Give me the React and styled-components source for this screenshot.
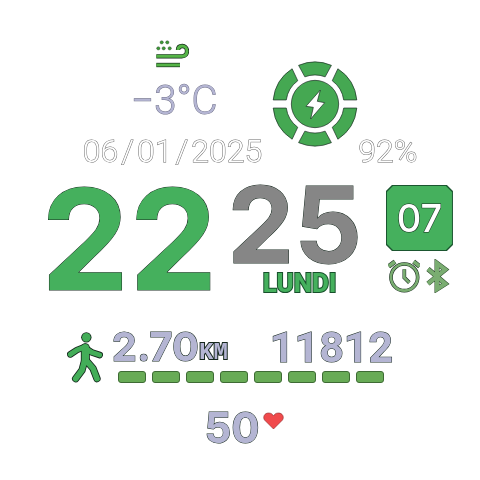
import React from "react";
import styled, { createGlobalStyle } from "styled-components";

const GlobalStyle = createGlobalStyle`
  * { box-sizing: border-box; }
  body { margin: 0; background: #fff; font-family: Inter, "Liberation Sans", sans-serif; }
`;

const ink = "#14261c";
const green = "#45b05d";
const lilac = "#b4b5d3";
const roboto = `Roboto, "Liberation Sans", sans-serif`;

const Face = styled.main`
  min-height: 100vh;
  padding: 40px 8px 32px;
  display: flex;
  flex-direction: column;
  align-items: center;
  will-change: transform;
`;

const StatusRow = styled.section`
  display: flex;
  align-items: flex-end;
  padding-left: 20px;
`;

const Weather = styled.div`
  display: flex;
  flex-direction: column;
  align-items: center;
`;

const Temperature = styled.div`
  margin: 18px 0 23px;
  padding-left: 4px;
  font-family: ${roboto};
  font-size: 40px;
  line-height: 30px;
  font-weight: 300;
  color: ${lilac};
  -webkit-text-stroke: 1px #6f7088;
  paint-order: stroke;
`;

const OutlineText = styled.div`
  font-family: ${roboto};
  font-size: 32px;
  line-height: 24px;
  font-weight: 300;
  color: #fff;
  -webkit-text-stroke: 1px #6a6a6a;
  paint-order: stroke;
  white-space: nowrap;
`;

const DateLine = styled(OutlineText)`
  display: flex;
  gap: 3px;
`;

const Gauge = styled.div`
  margin: 0 0 16px 10px;
  line-height: 0;
`;

const TimeRow = styled.section`
  display: flex;
  align-items: flex-start;
  margin-top: 22px;
  padding-left: 14px;
`;

const Digits = styled.div`
  font-family: ${(p) => p.$family || "inherit"};
  font-size: ${(p) => p.$size}px;
  line-height: ${(p) => p.$line}px;
  font-weight: ${(p) => p.$weight || 700};
  color: ${(p) => p.$color};
  -webkit-text-stroke: 1px ${ink};
  paint-order: stroke;
  white-space: nowrap;
`;

const Minutes = styled.div`
  display: flex;
  flex-direction: column;
  align-items: center;
  margin-left: 10px;
`;

const Weekday = styled.div`
  margin-top: 8px;
  padding-left: 10px;
  font-family: ${roboto};
  font-size: 26px;
  line-height: 20px;
  font-weight: 800;
  color: ${green};
  -webkit-text-stroke: 2px #17502b;
  paint-order: stroke;
`;

const Side = styled.div`
  display: flex;
  flex-direction: column;
  align-items: center;
  gap: 8px;
  margin-left: 24px;
`;

const chamfer = "polygon(6px 0, calc(100% - 6px) 0, 100% 6px, 100% calc(100% - 6px), calc(100% - 6px) 100%, 6px 100%, 0 calc(100% - 6px), 0 6px)";

const BadgeFrame = styled.div`
  padding: 1px;
  background: #1b5630;
  clip-path: ${chamfer};
`;

const Badge = styled.div`
  display: flex;
  align-items: center;
  justify-content: center;
  width: 65px;
  height: 64px;
  background: ${green};
  clip-path: ${chamfer};
`;

const Indicators = styled.div`
  display: flex;
  gap: 6px;
  line-height: 0;
`;

const ActivityRow = styled.section`
  display: flex;
  align-items: flex-start;
  gap: 9px;
  margin-top: 39px;
  padding-right: 20px;
`;

const Stats = styled.div`
  display: flex;
  flex-direction: column;
`;

const StatLine = styled.div`
  display: flex;
  align-items: flex-end;
  justify-content: space-between;
  gap: 42px;
`;

const Distance = styled.div`
  display: flex;
  align-items: flex-end;
`;

const Unit = styled.span`
  font-family: "Liberation Mono", monospace;
  font-size: 24px;
  line-height: 18px;
  font-weight: 700;
  color: ${lilac};
  -webkit-text-stroke: 2px ${ink};
  paint-order: stroke;
`;

const Progress = styled.div`
  display: flex;
  gap: 6px;
  margin-top: 9px;
  padding-left: 6px;
`;

const Step = styled.span`
  width: 28px;
  height: 12px;
  border: 1px solid #3e6b34;
  border-radius: 3px;
  background: #68ab56;
`;

const HeartRow = styled.section`
  display: flex;
  align-items: flex-start;
  gap: 3px;
  margin-top: 29px;
  padding-left: 8px;
  line-height: 0;
`;

function WindIcon() {
  return (
    <svg width="33" height="28" viewBox="107 32 99 84" aria-hidden="true">
      {[[124, 39], [141, 39], [114, 57], [130, 57], [148, 57]].map(([x, y]) => (
        <circle key={`${x}-${y}`} cx={x} cy={y} r="5" fill="#3f9a38" stroke={ink} strokeWidth="1" />
      ))}
      {[[ink, 13], ["#55b447", 9]].map(([c, w]) => (
        <g key={c} fill="none" stroke={c} strokeWidth={w}>
          <path d="M108 81H184C196 81 200 73 200 65C200 55 193 50 186 50C178 50 173 54 173 62" />
          <path d="M108 107H179" />
        </g>
      ))}
    </svg>
  );
}

const point = (r, deg) => {
  const a = (deg * Math.PI) / 180;
  return `${165 + r * Math.cos(a)} ${162 - r * Math.sin(a)}`;
};

const segments = [
  [5.5, 57, 8, 53.5],
  [67, 113, 69.5, 110.5],
  [123, 174.5, 126.5, 172],
  [185.5, 237, 188, 233.5],
  [247, 293, 249.5, 290.5],
  [303, 354.5, 306.5, 352],
];

function BatteryGauge() {
  return (
    <svg width="86" height="86" viewBox="36 33 258 258" role="img" aria-label="Battery">
      <g fill="#45a852" stroke={ink} strokeWidth="2">
        {segments.map(([o1, o2, i1, i2]) => (
          <path
            key={o1}
            d={`M${point(126, o1)}A126 126 0 0 0 ${point(126, o2)}L${point(87, i2)}A87 87 0 0 1 ${point(87, i1)}Z`}
          />
        ))}
        <circle cx="165" cy="162" r="71" />
        <path fill="#fff" d="M181 120L138 169L160 172L152 207L194 158L172 154Z" />
      </g>
    </svg>
  );
}

function AlarmIcon() {
  return (
    <svg width="32" height="34" viewBox="38 252 96 102" aria-hidden="true">
      {[[ink, 3], ["#7aad71", 0]].map(([c, extra]) => (
        <g key={c} fill="none" stroke={c}>
          <circle cx="87" cy="307" r="40" strokeWidth={8 + extra} />
          <path d="M87 283V308L102 323" strokeWidth={8 + extra} />
          <path d="M40 274L59 260M115 260L133 274" strokeWidth={11 + extra} />
        </g>
      ))}
    </svg>
  );
}

function BluetoothIcon() {
  return (
    <svg width="24" height="34" viewBox="154 250 72 102" aria-hidden="true">
      {[["#2c4a2b", 15], ["#7aad71", 12]].map(([c, w]) => (
        <path
          key={c}
          d="M160 280L212 324L187 340V263L212 282L160 324"
          fill="none"
          stroke={c}
          strokeWidth={w}
        />
      ))}
    </svg>
  );
}

function WalkIcon() {
  return (
    <svg width="36" height="51" viewBox="17 39 108 153" aria-hidden="true">
      {[[ink, 5], ["#43ad58", 0]].map(([c, extra]) => (
        <g key={c} fill="none" stroke={c} strokeLinecap="round" strokeLinejoin="round">
          <circle cx="75" cy="55" r={13 + extra / 2} fill={c} stroke="none" />
          <path d="M72 86V124" strokeWidth={22 + extra} />
          <path d="M70 84L47 93L27 106M76 90L91 100L115 108" strokeWidth={15 + extra} />
          <path d="M69 128L62 154L43 179M75 125L95 148L107 179" strokeWidth={17 + extra} />
        </g>
      ))}
    </svg>
  );
}

function HeartIcon() {
  return (
    <svg width="21" height="18" viewBox="0 0 21 18" aria-hidden="true">
      <path
        d="M10.5 17L1.5 8C-.5 5 1.5 1 5.5 1C8 1 9.5 2 10.5 4C11.5 2 13 1 15.5 1C19.5 1 21.5 5 19.5 8Z"
        fill="#f04a4c"
        stroke="#8d2a2b"
        strokeWidth="0.6"
      />
    </svg>
  );
}

export default function App() {
  return (
    <>
      <GlobalStyle />
      <Face>
        <StatusRow>
          <Weather>
            <WindIcon />
            <Temperature>−3°C</Temperature>
            <DateLine as="time" dateTime="2025-01-06">
              <span>06</span>
              <span>/</span>
              <span>01</span>
              <span>/</span>
              <span>2025</span>
            </DateLine>
          </Weather>
          <Gauge>
            <BatteryGauge />
          </Gauge>
          <OutlineText>92%</OutlineText>
        </StatusRow>

        <TimeRow>
          <Digits $size={140} $line={108} $color={green}>22</Digits>
          <Minutes>
            <Digits $size={106} $line={80} $color="#868686">25</Digits>
            <Weekday>LUNDI</Weekday>
          </Minutes>
          <Side>
            <BadgeFrame>
              <Badge>
                <Digits $size={38} $line={28} $weight={500} $color="#fff">07</Digits>
              </Badge>
            </BadgeFrame>
            <Indicators>
              <AlarmIcon />
              <BluetoothIcon />
            </Indicators>
          </Side>
        </TimeRow>

        <ActivityRow>
          <WalkIcon />
          <Stats>
            <StatLine>
              <Distance>
                <Digits as="span" $size={40} $line={30} $color={lilac}>2.70</Digits>
                <Unit>KM</Unit>
              </Distance>
              <Digits as="span" $family={roboto} $size={43} $line={30} $color={lilac}>11812</Digits>
            </StatLine>
            <Progress role="img" aria-label="Step goal">
              {Array.from({ length: 8 }, (_, i) => (
                <Step key={i} />
              ))}
            </Progress>
          </Stats>
        </ActivityRow>

        <HeartRow>
          <Digits as="span" $size={42} $line={32} $color={lilac}>50</Digits>
          <HeartIcon />
        </HeartRow>
      </Face>
    </>
  );
}
